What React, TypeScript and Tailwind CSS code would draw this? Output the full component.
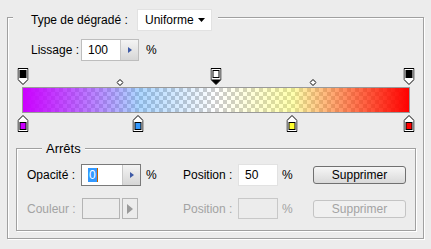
import React from "react";

type TopStopProps = { pos: string; color: string; selected?: boolean };

function TopStop({ pos, color, selected }: TopStopProps) {
  return (
    <svg
      width="11"
      height="17"
      viewBox="0 0 11 17"
      className={`absolute top-0 -translate-x-1/2 ${pos}`}
    >
      <path d="M0.5 0.5H10.5V11.5L5.5 16.5L0.5 11.5Z" fill="#fff" stroke="#000" />
      {selected && <path d="M0.5 11.5L5.5 16.5L10.5 11.5Z" fill="#000" />}
      <rect x="2.5" y="2.5" width="6" height="7" fill={color} stroke="#000" />
    </svg>
  );
}

function BottomStop({ pos, color }: { pos: string; color: string }) {
  return (
    <svg
      width="11"
      height="17"
      viewBox="0 0 11 17"
      className={`absolute top-0 -translate-x-1/2 ${pos}`}
    >
      <path d="M5.5 0.5L10.5 5.5V16.5H0.5V5.5Z" fill="#fff" stroke="#000" />
      <rect x="2.5" y="7.5" width="6" height="7" fill={color} stroke="#000" />
    </svg>
  );
}

function Diamond({ pos }: { pos: string }) {
  return (
    <svg
      width="7"
      height="7"
      viewBox="0 0 7 7"
      className={`absolute top-[11px] -translate-x-1/2 ${pos}`}
    >
      <path d="M3.5 0.5L6.5 3.5L3.5 6.5L0.5 3.5Z" fill="#fff" stroke="#000" />
    </svg>
  );
}

function Spin() {
  return (
    <div className="w-[18px] h-full border-l border-[#c8c8c8] bg-[linear-gradient(#f4f4f4,#d6d6d6)] flex items-center justify-center">
      <svg width="4" height="6" viewBox="0 0 4 6">
        <path d="M0 0L4 3L0 6Z" fill="#3e5aa6" />
      </svg>
    </div>
  );
}

export default function App() {
  return (
    <div className="w-[431px] h-[249px] bg-[#ececec] px-[7px] pt-[9px] font-['Liberation_Sans',Arial,sans-serif] text-[12px] text-black leading-none">
      <fieldset className="border border-[#a0a0a0] shadow-[inset_1px_1px_0_#fff,1px_1px_0_#fff] pb-[7px]">
        <legend className="ml-[5px] pl-[18px] pr-[6px] h-[16px] bg-[#ececec]">
          <div className="flex items-center h-[22px]">
            <span className="w-[106px]">Type de dégradé :</span>
            <div className="w-[75px] h-[22px] bg-white border border-[#e2e2e2] flex items-center pl-[7px] pr-[6px] justify-between">
              <span>Uniforme</span>
              <svg width="7" height="4" viewBox="0 0 7 4">
                <path d="M0 0H7L3.5 4Z" fill="#000" />
              </svg>
            </div>
          </div>
        </legend>

        <div className="flex items-center pl-[23px] mt-[14px]">
          <span className="w-[50px]">Lissage :</span>
          <div className="w-[58px] h-[22px] bg-white border border-[#bdbdbd] flex">
            <span className="flex-1 pl-[6px] flex items-center">100</span>
            <Spin />
          </div>
          <span className="ml-[7px]">%</span>
        </div>

        <div className="ml-[14px] w-[388px] mt-[7px]">
          <div className="relative h-[17px] mx-[1px]">
            <TopStop pos="left-0" color="#000" />
            <Diamond pos="left-[25%]" />
            <TopStop pos="left-[50%]" color="#fff" selected />
            <Diamond pos="left-[75%]" />
            <TopStop pos="left-full" color="#000" />
          </div>
          <div className="mt-[2px] h-[26px] border border-[#9a9a9a] bg-[image:repeating-conic-gradient(#cccccc_0%_25%,#ffffff_0%_50%)] bg-[length:8px_8px]">
            <div className="w-full h-full bg-[image:linear-gradient(to_right,rgba(204,0,255,1)_0%,rgba(51,153,255,0.4)_30%,rgba(153,204,153,0)_50%,rgba(255,255,51,0.4)_70%,rgba(255,0,0,1)_100%)]" />
          </div>
          <div className="relative h-[17px] mx-[1px] mt-[2px]">
            <BottomStop pos="left-0" color="#cc00ff" />
            <BottomStop pos="left-[29.7%]" color="#3399ff" />
            <BottomStop pos="left-[69.6%]" color="#ffff33" />
            <BottomStop pos="left-full" color="#ff0000" />
          </div>
        </div>

        <fieldset className="ml-[8px] w-[400px] mt-[9px] border border-[#a0a0a0] shadow-[inset_1px_1px_0_#fff,1px_1px_0_#fff] pl-[10px] pb-[11px]">
          <legend className="ml-[15px] px-[4px] h-[15px] bg-[#ececec] text-[13px] flex items-center">
            Arrêts
          </legend>

          <div className="flex items-center mt-[8px] h-[22px]">
            <span className="w-[54px]">Opacité :</span>
            <div className="w-[60px] h-[22px] bg-white border border-[#7a7a7a] flex">
              <span className="flex-1 pl-[6px] flex items-center">
                <span className="bg-[#3399ff] text-white px-[1px] leading-[14px]">0</span>
                <span className="w-[1px] h-[14px] bg-[#c06000]" />
              </span>
              <Spin />
            </div>
            <span className="ml-[5px] w-[37px]">%</span>
            <span className="w-[55px]">Position :</span>
            <div className="w-[40px] h-[22px] bg-white border border-[#e2e2e2] flex items-center pl-[6px]">
              50
            </div>
            <span className="ml-[4px] w-[31px]">%</span>
            <div className="w-[93px] h-[18px] rounded-[3px] border border-[#707070] bg-[linear-gradient(#f6f6f6,#d9d9d9)] flex items-center justify-center">
              Supprimer
            </div>
          </div>

          <div className="flex items-center mt-[12px] h-[21px] text-[#a3a3a3]">
            <span className="w-[55px]">Couleur :</span>
            <div className="w-[38px] h-[21px] border border-[#b4b4b4]" />
            <div className="ml-[2px] w-[16px] h-[21px] border border-[#b4b4b4] flex items-center justify-center">
              <svg width="6" height="10" viewBox="0 0 6 10">
                <path d="M0 0L6 5L0 10Z" fill="#9a9a9a" />
              </svg>
            </div>
            <span className="ml-[45px] w-[55px]">Position :</span>
            <div className="w-[40px] h-[21px] border border-[#c8c8c8]" />
            <span className="ml-[4px] w-[31px]">%</span>
            <div className="w-[93px] h-[18px] rounded-[3px] border border-[#c4c4c4] bg-[#f0f0f0] flex items-center justify-center">
              Supprimer
            </div>
          </div>
        </fieldset>
      </fieldset>
    </div>
  );
}
